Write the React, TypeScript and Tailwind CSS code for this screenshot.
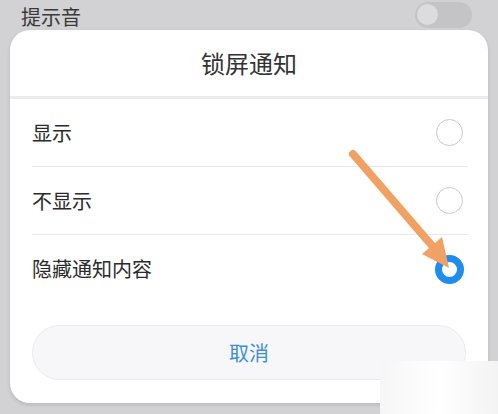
import React from "react";

const font = { fontFamily: '"Noto Sans CJK SC", "Noto Sans", sans-serif' };

function Radio({ checked }: { checked?: boolean }) {
  if (checked) {
    return <div className="w-[29px] h-[29px] rounded-full border-[7px] border-[#1f8cf0] bg-white" />;
  }
  return <div className="w-[27px] h-[27px] rounded-full border border-[#c9c9c9] bg-white" />;
}

function Row({ label, checked, last }: { label: string; checked?: boolean; last?: boolean }) {
  return (
    <div className={`flex items-center justify-between h-[68px] ${last ? "" : "border-b border-[#e8e8ea]"}`}>
      <span className="text-[20px] text-[#2b2b2b]">{label}</span>
      <div className="w-[30px] flex justify-center mr-[4px]">
        <Radio checked={checked} />
      </div>
    </div>
  );
}

export default function App() {
  return (
    <div className="relative w-[498px] h-[414px] bg-[#d2d1d4] overflow-hidden" style={font}>
      <div className="flex items-center justify-between pl-[21px] pr-[26px] h-[33px]">
        <span className="text-[20px] text-[#3a3a3a] leading-none mt-[1px]">提示音</span>
        <div className="w-[57px] h-[26px] rounded-full bg-[#c4c3c6] flex items-center px-[2px] -mt-[4px]">
          <div className="w-[21px] h-[21px] rounded-full bg-[#dcdcde]" />
        </div>
      </div>

      <div className="mx-[10px] mt-[-3px] bg-white rounded-[20px] h-[373px] shadow-[0_2px_4px_rgba(0,0,0,0.12)] flex flex-col">
        <div className="h-[69px] flex items-center justify-center border-b-[3px] border-[#ececee]">
          <span className="text-[24px] text-[#333]">锁屏通知</span>
        </div>
        <div className="px-[22px] pr-[20px]">
          <Row label="显示" />
          <Row label="不显示" />
          <Row label="隐藏通知内容" checked last />
        </div>
        <div className="px-[22px] mt-[22px]">
          <div className="h-[55px] rounded-full bg-[#f7f7f9] border border-[#ebebee] flex items-center justify-center">
            <span className="text-[20px] text-[#3c8fd3]">取消</span>
          </div>
        </div>
      </div>

      <svg className="absolute left-0 top-0" width="498" height="414" viewBox="0 0 498 414">
        <line x1="353" y1="154" x2="434" y2="248" stroke="#f0a163" strokeWidth="8" strokeLinecap="round" />
        <polygon points="449,268 422,254 442,237" fill="#f0a163" />
      </svg>

      <div className="absolute left-[380px] top-[361px] w-[118px] h-[53px] bg-gradient-to-r from-[#f6f6f6] via-white to-[#f3f3f3]" />
    </div>
  );
}
